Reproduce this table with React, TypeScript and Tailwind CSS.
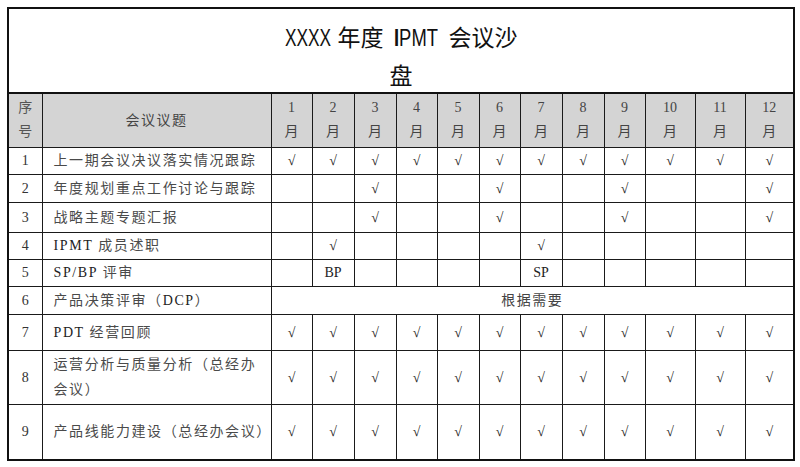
import React from "react";

const monthWidths = [
  "w-[41px]", "w-[42px]", "w-[42px]", "w-[41px]", "w-[42px]", "w-[41px]",
  "w-[42px]", "w-[42px]", "w-[41px]", "w-[50px]", "w-[50px]", "w-[49px]",
];

type Row = {
  n: number;
  topic: React.ReactNode;
  h: string;
  cells?: (string | null)[];
  span?: string;
};

const all = Array(12).fill("√");
const pick = (m: Record<number, string>) =>
  Array.from({ length: 12 }, (_, i) => m[i + 1] ?? null);

const rows: Row[] = [
  { n: 1, topic: "上一期会议决议落实情况跟踪", h: "h-[27px]", cells: all },
  { n: 2, topic: "年度规划重点工作讨论与跟踪", h: "h-[28px]", cells: pick({ 3: "√", 6: "√", 9: "√", 12: "√" }) },
  { n: 3, topic: "战略主题专题汇报", h: "h-[30px]", cells: pick({ 3: "√", 6: "√", 9: "√", 12: "√" }) },
  { n: 4, topic: <><span className="text-[#222]">IPMT</span> 成员述职</>, h: "h-[27px]", cells: pick({ 2: "√", 7: "√" }) },
  { n: 5, topic: <><span className="text-[#222]">SP/BP</span> 评审</>, h: "h-[27px]", cells: pick({ 2: "BP", 7: "SP" }) },
  { n: 6, topic: <>产品决策评审（<span className="text-[#222]">DCP</span>）</>, h: "h-[28px]", span: "根据需要" },
  { n: 7, topic: <><span className="text-[#222]">PDT</span> 经营回顾</>, h: "h-[36px]", cells: all },
  { n: 8, topic: <>运营分析与质量分析（总经办<br />会议）</>, h: "h-[54px]", cells: all },
  { n: 9, topic: "产品线能力建设（总经办会议）", h: "h-[56px]", cells: all },
];

const serif = "font-['Liberation_Serif','Noto_Sans_CJK_SC',serif]";
const cellB = "border border-[#1a1a1a]";
const latin = "font-['Liberation_Sans',sans-serif]";

export default function App() {
  return (
    <div className="w-[800px] h-[467px] bg-white pl-[7px] pt-[7px] overflow-hidden">
      <table className={`table-fixed border-collapse w-[788px] border-2 border-[#111] ${serif} text-[14px] text-[#444]`}>
        <colgroup>
          <col className="w-[34px]" />
          <col className="w-[229px]" />
          {monthWidths.map((w, i) => (
            <col key={i} className={w} />
          ))}
        </colgroup>
        <tbody>
          <tr>
            <td
              colSpan={14}
              className={`${cellB} border-2 border-[#111] h-[79px] align-top pt-[9px] text-center text-[23px] leading-[36px] text-[#111] font-['Noto_Sans_CJK_SC',sans-serif] whitespace-nowrap`}
            >
              <span className="inline-block w-[46px] text-left align-baseline">
                <span className={`inline-block origin-left scale-x-[0.75] ${latin}`}>XXXX</span>
              </span>
              <span className="inline-block ml-[7px]">年度</span>
              <span className="inline-block ml-[10px] w-[44px] text-left">
                <span className={`inline-block origin-left scale-x-[0.8] ${latin}`}>
                  <span className="font-bold">I</span>PMT
                </span>
              </span>
              <span className="inline-block ml-[11px]">会议沙</span>
              <br />
              <span className="inline-block">盘</span>
            </td>
          </tr>
          <tr className="bg-[#d4d4d4]">
            <td className={`${cellB} h-[54px] text-center leading-[24px] text-[#555]`}>
              序<br />号
            </td>
            <td className={`${cellB} text-center tracking-[1.5px] text-[#444]`}>会议议题</td>
            {monthWidths.map((_, i) => (
              <td key={i} className={`${cellB} text-center leading-[24px] text-[#444]`}>
                {i + 1}
                <br />
                月
              </td>
            ))}
          </tr>
          {rows.map((r) => (
            <tr key={r.n}>
              <td className={`${cellB} ${r.h} text-center text-[#333]`}>{r.n}</td>
              <td className={`${cellB} pl-[11px] whitespace-nowrap tracking-[1.6px] leading-[25px] text-[#4a4a4a]`}>
                {r.topic}
              </td>
              {r.span ? (
                <td colSpan={12} className={`${cellB} text-center tracking-[1.5px] text-[#444]`}>
                  {r.span}
                </td>
              ) : (
                r.cells!.map((c, i) => (
                  <td key={i} className={`${cellB} text-center text-[#222]`}>
                    {c ?? ""}
                  </td>
                ))
              )}
            </tr>
          ))}
        </tbody>
      </table>
    </div>
  );
}
